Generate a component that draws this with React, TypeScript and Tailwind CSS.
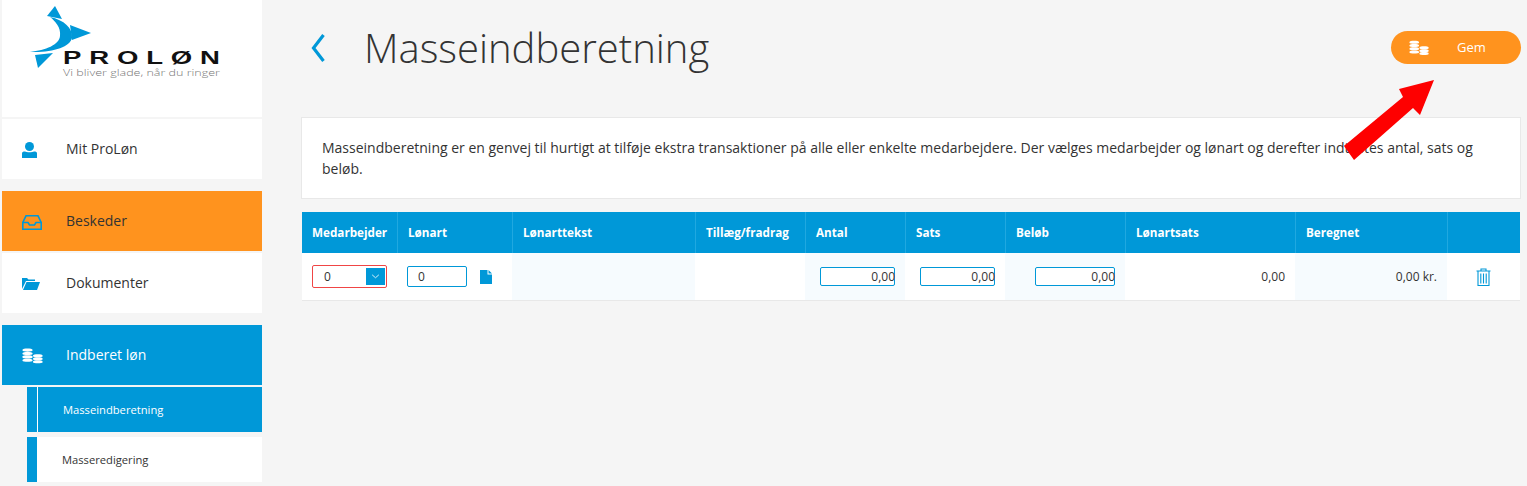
const font = { fontFamily: '"Open Sans", sans-serif' };

function Coins({ className }: { className?: string }) {
  const disc = (x: number, y: number, r: number) => (
    <path key={`${x}-${y}`} d={`M${x - r} ${y} C${x - r} ${y - 1.6} ${x + r} ${y - 1.6} ${x + r} ${y} V${y + 0.9} C${x + r} ${y + 2.3} ${x - r} ${y + 2.3} ${x - r} ${y + 0.9}Z`} />
  );
  return (
    <svg viewBox="0 0 21 16" className={className} fill="currentColor">
      {[1.7, 5.1, 8.5, 11.9].map((y) => disc(5.5, y, 5))}
      {[7.4, 10.4, 13.4].map((y) => disc(15.8, y, 4.8))}
    </svg>
  );
}

function NavItem({ label, icon, className, text }: { label: string; icon: React.ReactNode; className: string; text: string }) {
  return (
    <div className={`h-[60px] flex items-center ${className}`}>
      <div className="w-[64px] pl-[20px] flex items-center">{icon}</div>
      <span className={`text-[14px] pb-[2px] ${text}`}>{label}</span>
    </div>
  );
}

function Logo() {
  return (
    <svg viewBox="0 0 260 117" className="w-[260px] h-[117px]">
      <g fill="#0098d8">
        <polygon points="53,6 45,16 60,19" />
        <polygon points="68,25 89,33 70,40" />
        <polygon points="33,55 51,53 36,68" />
        <path d="M48 17 C62 20 71 28 70 38 C68 47 50 53 28 52 C44 50 57 45 58 36 C59 27 53 21 48 17Z" />
      </g>
      <text transform="translate(61 64) scale(1.45 1)" fontFamily="'Liberation Sans', sans-serif" fontSize="19" fontWeight="700" letterSpacing="5.4" fill="#111">PROLØN</text>
      <text x="61" y="76" fontFamily="'Open Sans', sans-serif" fontSize="9" fontWeight="300" fill="#777" textLength="157" lengthAdjust="spacingAndGlyphs">Vi bliver glade, når du ringer</text>
    </svg>
  );
}

const cols = [
  { label: 'Medarbejder', w: 'w-[95px]' },
  { label: 'Lønart', w: 'w-[115px]' },
  { label: 'Lønarttekst', w: 'w-[183px]' },
  { label: 'Tillæg/fradrag', w: 'w-[110px]' },
  { label: 'Antal', w: 'w-[100px]' },
  { label: 'Sats', w: 'w-[100px]' },
  { label: 'Beløb', w: 'w-[120px]' },
  { label: 'Lønartsats', w: 'w-[170px]' },
  { label: 'Beregnet', w: 'w-[152px]' },
  { label: '', w: 'flex-1' },
];

function NumInput({ w, ml }: { w: string; ml: string }) {
  return (
    <div className={`${w} ${ml} h-[19px] border border-[#0098d8] rounded-[2px] bg-white flex items-center justify-end text-[12px] text-[#333]`}>
      <span className="translate-x-px">0,00</span>
    </div>
  );
}

export default function App() {
  return (
    <div style={font} className="relative w-[1527px] h-[486px] overflow-hidden bg-[#f5f5f5] flex text-[#333]">
      <aside className="w-[260px] ml-[2px] shrink-0 flex flex-col">
        <div className="h-[117px] bg-white"><Logo /></div>
        <NavItem
          className="bg-white mt-[2px]"
          text="text-[#333]"
          label="Mit ProLøn"
          icon={
            <svg viewBox="0 0 15 16" className="w-[15px] h-[16px] mt-[2px]" fill="#0098d8">
              <circle cx="7.5" cy="4.5" r="4.5" />
              <path d="M0 11.5 C0 10 1 9.5 3 9.5 C4.5 10.5 10.5 10.5 12 9.5 C14 9.5 15 10 15 11.5 V16 H0Z" />
            </svg>
          }
        />
        <NavItem
          className="bg-[#ff931e] mt-[12px]"
          text="text-[#333]"
          label="Beskeder"
          icon={
            <svg viewBox="0 0 20 15" className="w-[20px] h-[15px] mt-[3px]" fill="none" stroke="#0098d8" strokeWidth="1.6">
              <path d="M4 0.8 H16 L19.2 7.5 V14.2 H0.8 V7.5Z" />
              <path d="M0.8 7.5 H6 L7.5 10 H12.5 L14 7.5 H19.2" />
            </svg>
          }
        />
        <NavItem
          className="bg-white mt-[2px]"
          text="text-[#333]"
          label="Dokumenter"
          icon={
            <svg viewBox="0 0 18 13" className="w-[18px] h-[13px]" fill="#0098d8">
              <path d="M0 12 V1 H5 L6.5 2.5 H13 V4 H4 Z" />
              <path d="M4.5 5 H18 L15 13 H1Z" />
            </svg>
          }
        />
        <NavItem
          className="bg-[#0098d8] mt-[12px]"
          text="text-white"
          label="Indberet løn"
          icon={<Coins className="w-[21px] h-[16px] mt-[2px] text-white" />}
        />
        <div className="ml-[25px] mt-[2px] h-[45px] bg-[#0098d8] flex items-center">
          <div className="w-[10px] h-full" />
          <div className="w-px h-full bg-white" />
          <span className="ml-[25px] pt-[2px] text-[11.2px] font-medium text-white">Masseindberetning</span>
        </div>
        <div className="ml-[25px] mt-[5px] h-[45px] bg-white flex items-center">
          <div className="w-[10px] h-full bg-[#0098d8]" />
          <span className="ml-[25px] pt-[2px] text-[11.2px] text-[#333]">Masseredigering</span>
        </div>
      </aside>

      <main className="ml-[39px] w-[1220px] flex flex-col">
        <header className="h-[117px] flex items-start">
          <svg viewBox="0 0 14 30" className="w-[14px] h-[30px] mt-[33px] ml-[10px]" fill="none" stroke="#0098d8" strokeWidth="3.2">
            <path d="M12.5 2 L2.5 15 L12.5 28" />
          </svg>
          <h1 className="ml-[39px] mt-[20px] text-[40px] leading-[56px] font-light text-[#333]">Masseindberetning</h1>
          <button className="ml-auto mt-[31px] w-[130px] h-[33px] rounded-full bg-[#ff931e] flex items-center text-white text-[13px] font-normal">
            <Coins className="w-[20px] h-[16px] ml-[18px] text-white" />
            <span className="ml-[28px]">Gem</span>
          </button>
        </header>
        <div className="h-[82px] bg-white border border-[#e8e8e8] px-[20px] pt-[19px] text-[14px] leading-[21px] text-[#333]">
          Masseindberetning er en genvej til hurtigt at tilføje ekstra transaktioner på alle eller enkelte medarbejdere. Der vælges medarbejder og lønart og derefter indtastes antal, sats og beløb.
        </div>
        <div className="mt-[13px] mx-px border-b border-[#e8e8e8]">
          <div className="flex h-[41px] bg-[#0098d8] text-white text-[11.7px] font-bold">
            {cols.map((c) => (
              <div key={c.label} className={`${c.w} border-l border-[#20a8e0] first:border-l-0 flex items-center pl-[10px] whitespace-nowrap`}>
                {c.label}
              </div>
            ))}
          </div>
          <div className="flex h-[47px] bg-white text-[12px]">
            <div className="w-[95px] flex items-center pl-[10px]">
              <div className="w-[75px] h-[23px] border border-[#f04545] rounded-[2px] flex items-center justify-between pl-[11px] pr-px">
                <span>0</span>
                <span className="w-[19px] h-[17px] bg-[#0098d8] flex items-center justify-center">
                  <svg viewBox="0 0 10 6" className="w-[9px] h-[5px]" fill="none" stroke="white" strokeWidth="1"><path d="M1 1 L5 4.5 L9 1" /></svg>
                </span>
              </div>
            </div>
            <div className="w-[115px] flex items-center pl-[10px]">
              <div className="w-[60px] h-[21px] border border-[#0098d8] rounded-[2px] flex items-center pl-[10px]">0</div>
              <svg viewBox="0 0 12 14" className="w-[12px] h-[14px] ml-[13px]" fill="#0098d8">
                <path d="M0 0 H7.5 V4.5 H12 V14 H0Z" />
                <path d="M8.5 0 L12 3.5 H8.5Z" />
              </svg>
            </div>
            <div className="w-[183px] bg-[#f6fbfe]" />
            <div className="w-[110px]" />
            <div className="w-[100px] bg-[#f6fbfe] flex items-center"><NumInput w="w-[75px]" ml="ml-[15px]" /></div>
            <div className="w-[100px] flex items-center"><NumInput w="w-[75px]" ml="ml-[15px]" /></div>
            <div className="w-[120px] bg-[#f6fbfe] flex items-center"><NumInput w="w-[80px]" ml="ml-[30px]" /></div>
            <div className="w-[170px] flex items-center justify-end pr-[10px]">0,00</div>
            <div className="w-[152px] bg-[#f6fbfe] flex items-center justify-end pr-[10px]">0,00 kr.</div>
            <div className="flex-1 flex items-center pl-[29px]">
              <svg viewBox="0 0 15 18" className="w-[15px] h-[18px]" fill="none" stroke="#0098d8" strokeWidth="1.1">
                <path d="M0.5 3 H14.5 M5 3 V1 H10 V3 M2 3 V17.5 H13 V3 M4.8 5.5 V15.5 M7.5 5.5 V15.5 M10.2 5.5 V15.5" />
              </svg>
            </div>
          </div>
        </div>
      </main>

      <svg viewBox="0 0 1527 486" className="absolute inset-0 w-[1527px] h-[486px] pointer-events-none">
        <polygon fill="#fe0000" points="1434,80 1399,89 1403,97 1344,146 1354,160 1413,108 1420,115" />
      </svg>
    </div>
  );
}
